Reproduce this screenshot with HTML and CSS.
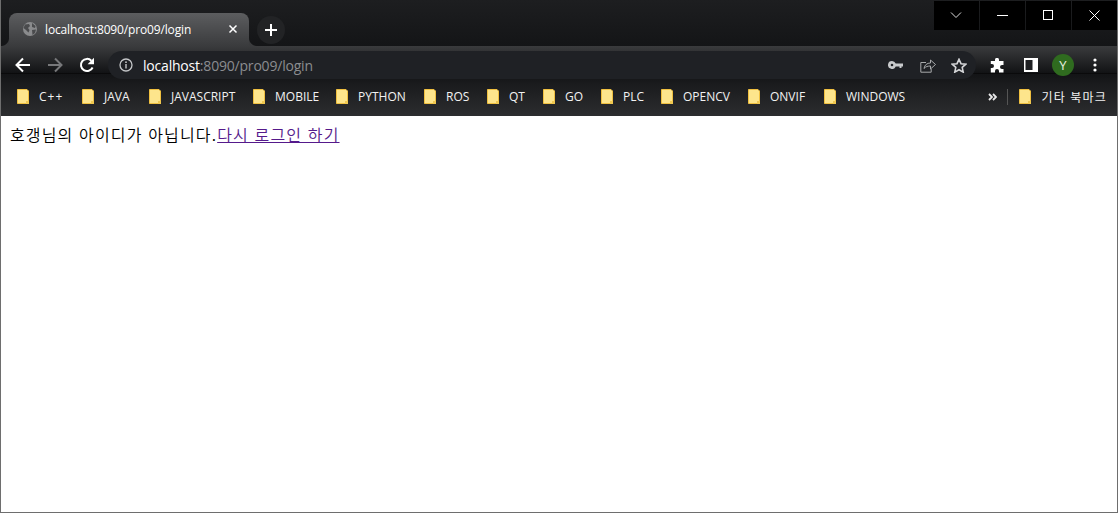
FILE: index.html
```html
<!DOCTYPE html>
<html lang="ko">
<head>
<meta charset="utf-8">
<title>localhost:8090/pro09/login</title>
<link rel="stylesheet" href="styles.css">
</head>
<body>
<div class="window">
  <header class="titlebar">
    <div class="tab">
      <svg class="globe" width="16" height="16" viewBox="0 0 16 16"><circle cx="8" cy="8" r="7" fill="#8a8b8d"/><path d="M3 3.500 7 3 8 5 6 7 7.500 9 6.500 11.500 4 9 1.500 7ZM10 2l3.500 3-.5 2-3-1ZM10 9l4-.5-1 3.500-2.500 2Z" fill="#4a4b4d"/></svg>
      <span class="tab-title">localhost:8090/pro09/login</span>
      <svg class="tab-close" width="10" height="10" viewBox="0 0 10 10"><path d="M1.500 1.500l7 7M8.500 1.500l-7 7" stroke="#fff" stroke-width="1.500"/></svg>
    </div>
    <div class="newtab"><svg width="12" height="12" viewBox="0 0 12 12"><path d="M6 0v12M0 6h12" stroke="#fff" stroke-width="2"/></svg></div>
    <div class="winctl">
      <div class="winbtn"><svg width="12" height="8" viewBox="0 0 12 8"><path d="M1 1.500l5 5 5-5" fill="none" stroke="#ddd"/></svg></div>
      <div class="winbtn"><svg width="11" height="1" viewBox="0 0 11 1"><path d="M0 .5h11" stroke="#fff"/></svg></div>
      <div class="winbtn"><svg width="10" height="10" viewBox="0 0 10 10"><rect x=".5" y=".5" width="9" height="9" fill="none" stroke="#fff"/></svg></div>
      <div class="winbtn"><svg width="11" height="11" viewBox="0 0 11 11"><path d="M.5.5l10 10M10.500.5l-10 10" stroke="#fff"/></svg></div>
    </div>
  </header>

  <nav class="toolbar">
    <svg class="nav-back" width="16" height="16" viewBox="0 0 16 16"><path d="M15 8H2M8 1.500 1.500 8 8 14.500" fill="none" stroke="#fff" stroke-width="2"/></svg>
    <svg class="nav-fwd" width="16" height="16" viewBox="0 0 16 16"><path d="M1 8h13M8 1.500 14.500 8 8 14.500" fill="none" stroke="#77787a" stroke-width="2"/></svg>
    <svg class="nav-reload" width="16" height="16" viewBox="0 0 16 16"><path d="M13.600 10.500A6.100 6.100 0 1 1 12.400 3.700" fill="none" stroke="#fff" stroke-width="2"/><path d="M15 .8v6.400H8.600Z" fill="#fff"/></svg>
    <div class="omnibox">
      <svg class="info" width="14" height="14" viewBox="0 0 14 14"><circle cx="7" cy="7" r="6" fill="none" stroke="#c4c6c8" stroke-width="1.300"/><path d="M7 6v4.500" stroke="#c4c6c8" stroke-width="1.400"/><circle cx="7" cy="4.200" r=".9" fill="#c4c6c8"/></svg>
      <span class="url"><span class="host">localhost</span><span class="path">:8090/pro09/login</span></span>
      <svg class="o-key" width="15" height="8" viewBox="0 0 15 8"><path fill-rule="evenodd" d="M4 0a4 4 0 0 1 3.700 2.500H15v3h-1.500V7h-2V5.500H7.700A4 4 0 1 1 4 0Zm0 2.700a1.300 1.300 0 1 0 0 2.600 1.300 1.300 0 0 0 0-2.600Z" fill="#c8cacc"/></svg>
      <svg class="o-share" width="16" height="15" viewBox="0 0 16 15"><path d="M6 4.500H.8v9.700h10.400V11" fill="none" stroke="#a8aaac"/><path d="M4 10.500C4.500 7 7 5 10.500 5V2l5 4.500-5 4.500V8C8 8 5.500 8.500 4 10.500Z" fill="none" stroke="#a8aaac"/></svg>
      <svg class="o-star" width="16" height="15" viewBox="0 0 16 15"><path d="M8 1.300 10 5.700l4.800.5-3.600 3.200 1 4.700L8 11.700l-4.200 2.400 1-4.700L1.200 6.200 6 5.700Z" fill="none" stroke="#d5d6d8" stroke-width="1.600"/></svg>
    </div>
    <svg class="t-ext" width="15" height="15" viewBox="0 0 15 15"><path d="M5 1.800a2 2 0 0 1 4 0V3h4.500v4H12a2 2 0 0 0 0 4h1.500v3.500H9V13a2 2 0 0 0-4 0v1.500H.8V10H2a2 2 0 0 0 0-4H.8V3H5Z" fill="#fff"/></svg>
    <svg class="t-side" width="14" height="14" viewBox="0 0 14 14"><rect width="14" height="14" fill="#fff"/><rect x="1.500" y="2" width="7" height="10" fill="#1f2023"/></svg>
    <div class="avatar">Y</div>
    <svg class="t-menu" width="4" height="14" viewBox="0 0 4 14"><circle cx="2" cy="2" r="1.600" fill="#fff"/><circle cx="2" cy="7" r="1.600" fill="#fff"/><circle cx="2" cy="12" r="1.600" fill="#fff"/></svg>
  </nav>

  <div class="bookmarks">
    <a class="bm w65"><svg class="folder" width="12" height="15" viewBox="0 0 12 15"><use href="#f"/></svg><span class="wide">C++</span></a>
    <a class="bm w67"><svg class="folder" width="12" height="15" viewBox="0 0 12 15"><use href="#f"/></svg><span>JAVA</span></a>
    <a class="bm w104"><svg class="folder" width="12" height="15" viewBox="0 0 12 15"><use href="#f"/></svg><span>JAVASCRIPT</span></a>
    <a class="bm w83"><svg class="folder" width="12" height="15" viewBox="0 0 12 15"><use href="#f"/></svg><span>MOBILE</span></a>
    <a class="bm w88"><svg class="folder" width="12" height="15" viewBox="0 0 12 15"><use href="#f"/></svg><span>PYTHON</span></a>
    <a class="bm w63"><svg class="folder" width="12" height="15" viewBox="0 0 12 15"><use href="#f"/></svg><span>ROS</span></a>
    <a class="bm w56"><svg class="folder" width="12" height="15" viewBox="0 0 12 15"><use href="#f"/></svg><span>QT</span></a>
    <a class="bm w58"><svg class="folder" width="12" height="15" viewBox="0 0 12 15"><use href="#f"/></svg><span>GO</span></a>
    <a class="bm w60"><svg class="folder" width="12" height="15" viewBox="0 0 12 15"><use href="#f"/></svg><span>PLC</span></a>
    <a class="bm w87"><svg class="folder" width="12" height="15" viewBox="0 0 12 15"><use href="#f"/></svg><span>OPENCV</span></a>
    <a class="bm w76"><svg class="folder" width="12" height="15" viewBox="0 0 12 15"><use href="#f"/></svg><span>ONVIF</span></a>
    <a class="bm"><svg class="folder" width="12" height="15" viewBox="0 0 12 15"><use href="#f"/></svg><span>WINDOWS</span></a>
    <div class="bm-right">
      <svg class="more" width="9" height="8" viewBox="0 0 9 8"><path d="M1 1l3 3-3 3M5 1l3 3-3 3" fill="none" stroke="#e8e8e8" stroke-width="1.800"/></svg>
      <i class="sep"></i>
      <a class="bm other"><svg class="folder" width="12" height="15" viewBox="0 0 12 15"><use href="#f"/></svg><span>기타 북마크</span></a>
    </div>
  </div>

  <main class="content">호갱님의 아이디가 아닙니다.<a class="relogin" href="#">다시 로그인 하기</a></main>
</div>
<svg class="defs" width="0" height="0"><defs><g id="f"><path d="M.5.500H10L11.500 2v12.500H.5Z" fill="#fde58c" stroke="#f0c040"/><path d="M9 12h3v3H9Z" fill="#f0c850"/></g></defs></svg>
</body>
</html>
```

FILE: styles.css
```css
html, body { margin: 0; height: 100%; overflow: hidden; background: #fff; }
.window { box-sizing: border-box; width: 1118px; height: 513px; border: 1px solid #6e6e6e; border-top: 0; display: flex; flex-direction: column; font-family: "Open Sans", "Noto Sans CJK KR", sans-serif; }
.defs { position: absolute; }

.titlebar { height: 46px; background: linear-gradient(#1d1e20, #141517); display: flex; align-items: flex-start; flex: none; }
.tab { position: relative; margin: 13px 0 0 8px; width: 240px; height: 33px; box-sizing: border-box; padding: 0 11px 1px 13px; border-radius: 8px 8px 0 0; background: linear-gradient(#5c5d5f, #3a3b3d); display: flex; align-items: center; }
.tab::before, .tab::after { content: ""; position: absolute; bottom: 0; width: 8px; height: 8px; }
.tab::before { left: -8px; background: radial-gradient(circle at 0 0, transparent 7.500px, #3a3b3d 8.500px); }
.tab::after { right: -8px; background: radial-gradient(circle at 100% 0, transparent 7.500px, #3a3b3d 8.500px); }
.globe { flex: none; }
.tab-title { margin-left: 7px; flex: 1; color: #fff; font-size: 12px; letter-spacing: -.15px; white-space: nowrap; }
.tab-close { flex: none; }
.newtab { margin: 16px 0 0 8px; width: 28px; height: 28px; border-radius: 50%; background: #222325; display: flex; align-items: center; justify-content: center; }
.winctl { margin-left: auto; margin-top: 1px; display: flex; gap: 1px; }
.winbtn { width: 45px; height: 29px; box-sizing: border-box; padding: 0 1px 1px 0; background: #000; display: flex; align-items: center; justify-content: center; }

.toolbar { height: 38px; flex: none; box-sizing: border-box; padding-left: 14px; background: linear-gradient(#3a3b3d 0, #121315 27px, #0a0a0b 27px, #0a0a0b 28px, #131416 28px, #1a1b1d 38px); display: flex; align-items: center; }
.nav-fwd { margin-left: 16px; }
.nav-reload { margin-left: 16px; }
.omnibox { margin-left: 13px; width: 868px; height: 28px; border-radius: 14px; background: #1f2125; display: flex; align-items: center; padding-left: 11px; box-sizing: border-box; }
.url { margin-left: 10px; flex: 1; font-size: 14px; letter-spacing: -.2px; white-space: nowrap; }
.host { color: #fff; }
.path { color: #8b8d90; }
.o-key { margin-right: 17px; }
.o-share { margin-right: 15px; }
.o-star { margin-right: 9px; }
.t-ext { margin-left: 14px; }
.t-side { margin-left: 19px; }
.avatar { margin-left: 14px; width: 22px; height: 22px; border-radius: 50%; background: #2f6b1f; color: #e8f0e0; font-size: 13px; display: flex; align-items: center; justify-content: center; }
.t-menu { margin-left: 19px; }

.bookmarks { height: 32px; flex: none; box-sizing: border-box; padding: 0 0 7px 16px; background: linear-gradient(#1a1b1d, #2c2d2f); display: flex; align-items: center; color: #f2f2f2; font-size: 12px; }
.bm { display: flex; align-items: center; white-space: nowrap; }
.bm span { margin-left: 10px; }
.bm .wide { letter-spacing: 1px; }
.w65 { width: 65px; } .w67 { width: 67px; } .w104 { width: 104px; } .w83 { width: 83px; } .w88 { width: 88px; }
.w63 { width: 63px; } .w56 { width: 56px; } .w58 { width: 58px; } .w60 { width: 60px; } .w87 { width: 87px; } .w76 { width: 76px; }
.bm-right { margin-left: auto; display: flex; align-items: center; padding-right: 10px; }
.other span { letter-spacing: 1.200px; }
.sep { width: 1px; height: 16px; background: #555; margin: 0 11px 0 10px; }

.content { flex: 1; background: #fff; color: #000; padding: 9px 9px; font-size: 16px; line-height: 18px; font-weight: 350; letter-spacing: 1.150px; font-family: "Noto Sans CJK KR", sans-serif; }
.relogin { color: #551a8b; text-decoration: underline; }
```
